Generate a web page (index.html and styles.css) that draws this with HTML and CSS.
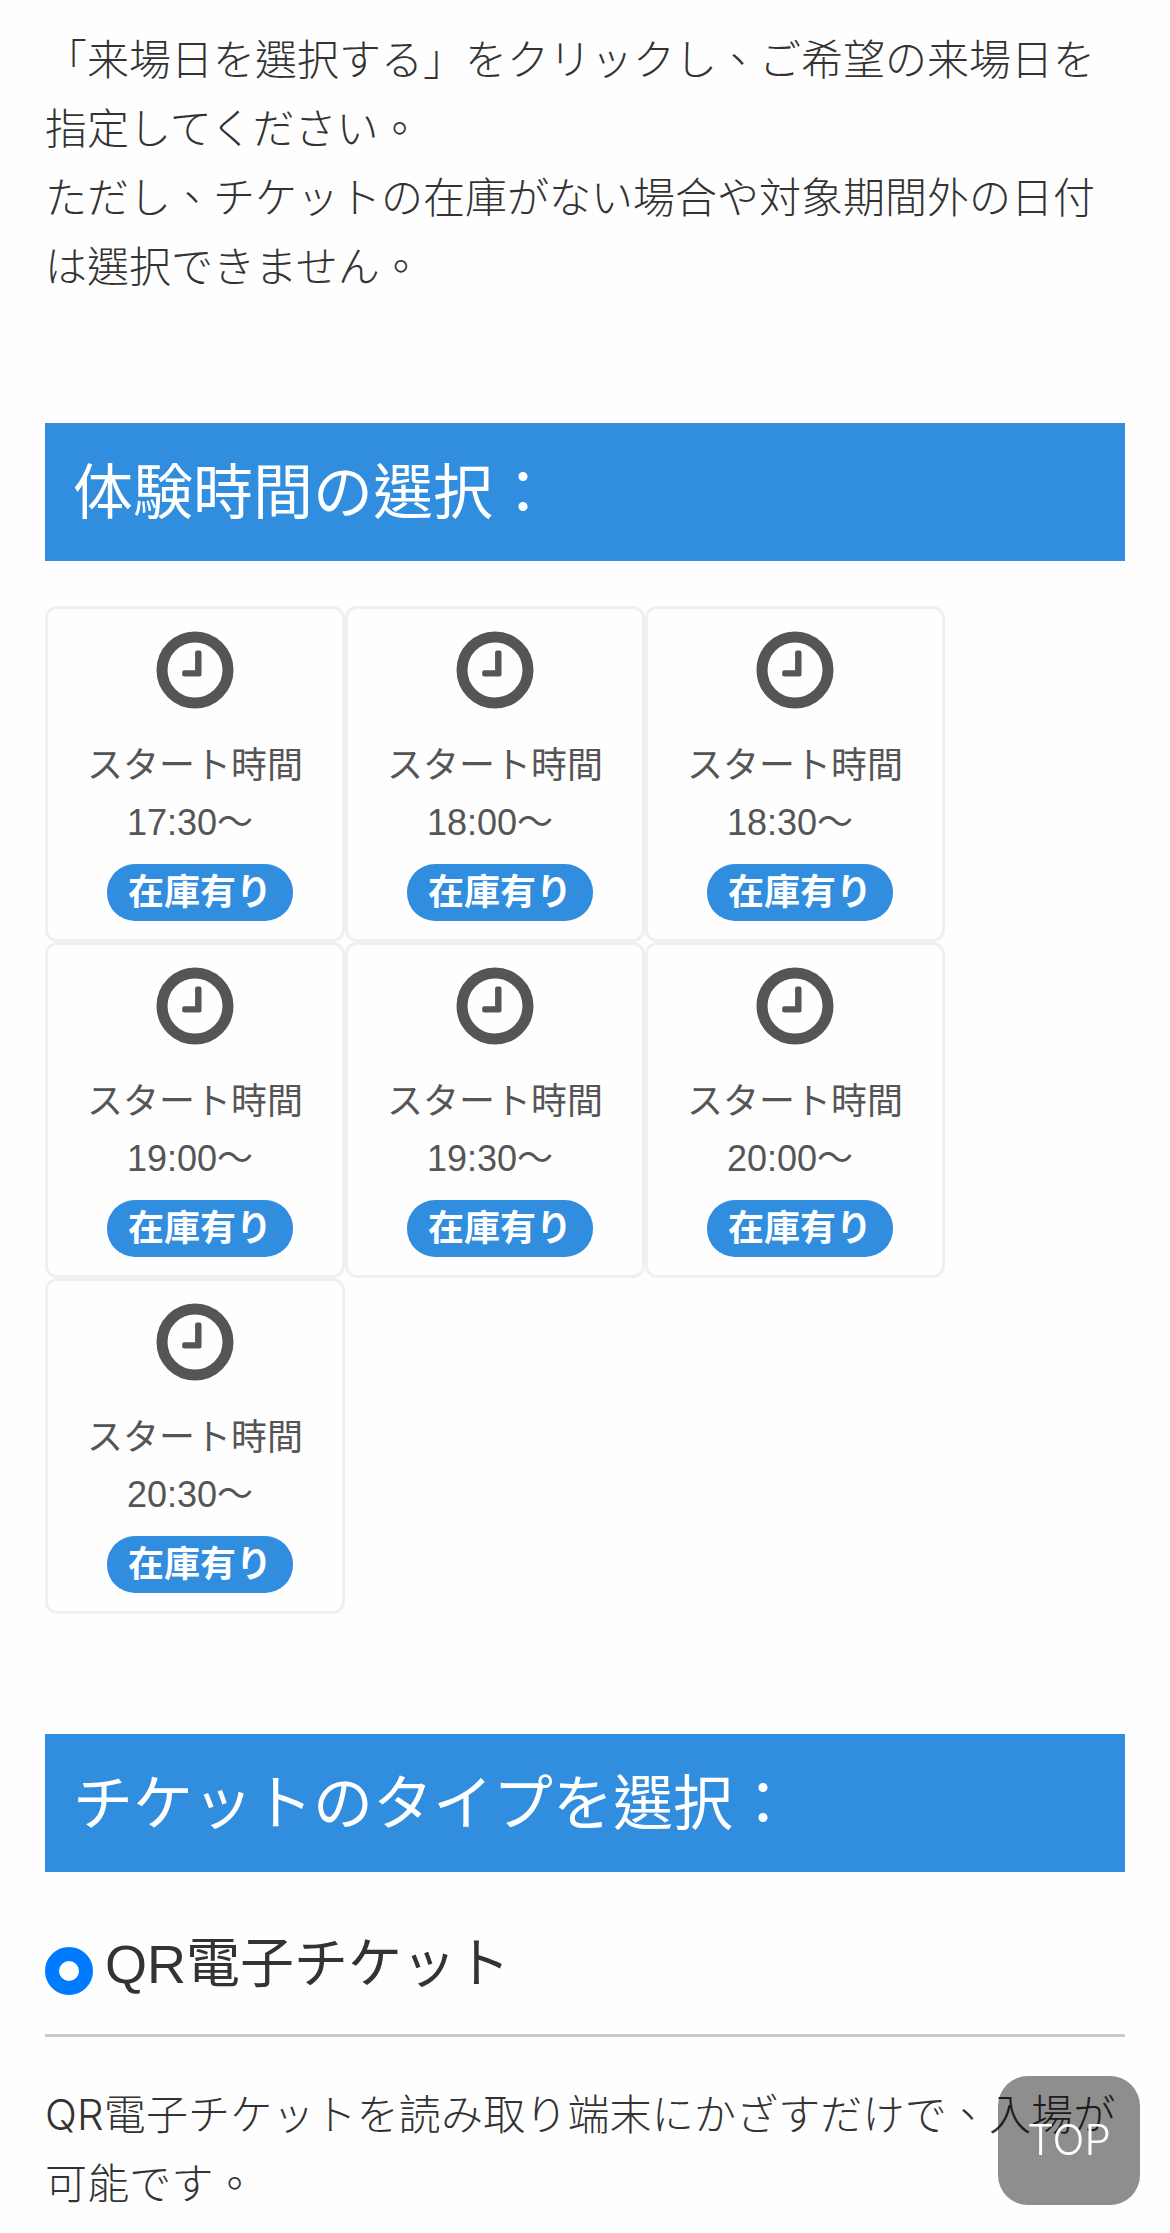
FILE: index.html
```html
<!DOCTYPE html>
<html lang="zh-Hant">
<head>
    <meta charset="UTF-8">
    <meta name="viewport" content="width=device-width, initial-scale=1.0">
    <title>チケット購入</title>
    <link rel="stylesheet" href="styles.css">
</head>
<body>
    <svg class="symbols" aria-hidden="true">
        <symbol id="clock" viewBox="0 0 78 78">
            <circle cx="39" cy="39" r="33" fill="none" stroke="currentColor" stroke-width="11"/>
            <path d="M41 19.500h2.500a2 2 0 0 1 2 2v22a2 2 0 0 1-2 2h-15.300a2 2 0 0 1-2-2v-2.300a2 2 0 0 1 2-2h10.900v-17.700a2 2 0 0 1 2-2z" fill="currentColor"/>
        </symbol>
    </svg>
    <div class="container">
        <p class="text">「来場日を選択する」をクリックし、ご希望の来場日を指定してください。<br>ただし、チケットの在庫がない場合や対象期間外の日付は選択できません。</p>

        <h2 class="title">体験時間の選択：</h2>
        <div class="times">
            <div class="time-card">
                <svg class="clock"><use href="#clock"/></svg>
                <div class="label">スタート時間</div>
                <div class="time">17:30〜&nbsp;</div>
                <span class="stock">在庫有り</span>
            </div>
            <div class="time-card">
                <svg class="clock"><use href="#clock"/></svg>
                <div class="label">スタート時間</div>
                <div class="time">18:00〜&nbsp;</div>
                <span class="stock">在庫有り</span>
            </div>
            <div class="time-card">
                <svg class="clock"><use href="#clock"/></svg>
                <div class="label">スタート時間</div>
                <div class="time">18:30〜&nbsp;</div>
                <span class="stock">在庫有り</span>
            </div>
            <div class="time-card">
                <svg class="clock"><use href="#clock"/></svg>
                <div class="label">スタート時間</div>
                <div class="time">19:00〜&nbsp;</div>
                <span class="stock">在庫有り</span>
            </div>
            <div class="time-card">
                <svg class="clock"><use href="#clock"/></svg>
                <div class="label">スタート時間</div>
                <div class="time">19:30〜&nbsp;</div>
                <span class="stock">在庫有り</span>
            </div>
            <div class="time-card">
                <svg class="clock"><use href="#clock"/></svg>
                <div class="label">スタート時間</div>
                <div class="time">20:00〜&nbsp;</div>
                <span class="stock">在庫有り</span>
            </div>
            <div class="time-card">
                <svg class="clock"><use href="#clock"/></svg>
                <div class="label">スタート時間</div>
                <div class="time">20:30〜&nbsp;</div>
                <span class="stock">在庫有り</span>
            </div>
        </div>

        <h2 class="title title-type">チケットのタイプを選択：</h2>
        <label class="ticket-type">
            <input type="radio" name="ticket" class="radio" checked>
            <span class="ticket-name">QR電子チケット</span>
        </label>
        <p class="text text-type">QR電子チケットを読み取り端末にかざすだけで、入場が可能です。</p>
    </div>
    <a href="#" class="top-button">TOP</a>
</body>
</html>
```

FILE: styles.css
```css
* {
    box-sizing: border-box;
}
body {
    font-family: "Liberation Sans", "Noto Sans CJK TC", sans-serif;
    margin: 0;
    height: 2233px;
    overflow: hidden;
    background-color: #fefefe;
    color: #333;
}
.symbols {
    display: none;
}
.container {
    padding: 25px 45px 0;
}
.text {
    font-family: "Inter", "Noto Sans CJK TC", sans-serif;
    font-size: 42px;
    font-weight: 300;
    line-height: 69px;
    margin: 0;
}
.text-type {
    letter-spacing: 0.15px;
}
.title {
    height: 138px;
    margin: 122px 0 45px;
    padding: 2px 0 0 28px;
    font-size: 60px;
    font-weight: 400;
    line-height: 138px;
    background-color: #318dde;
    color: #fff;
}
.title-type {
    margin: 120px 0 46px;
}
.times {
    display: flex;
    flex-wrap: wrap;
    width: 900px;
}
.time-card {
    display: flex;
    flex-direction: column;
    align-items: center;
    width: 300px;
    height: 336px;
    padding-top: 22px;
    border: 3px solid #f0f0f0;
    border-radius: 12px;
    color: #555;
    font-size: 36px;
}
.clock {
    width: 78px;
    height: 78px;
    margin-bottom: 28px;
}
.label,
.time {
    line-height: 57px;
}
.stock {
    height: 57px;
    margin: 13px 0 0 10px;
    padding: 0 21px;
    border-radius: 28px;
    font-weight: bold;
    line-height: 58px;
    background-color: #318dde;
    color: #fff;
}
.ticket-type {
    display: flex;
    align-items: center;
    height: 119px;
    margin-bottom: 43px;
    padding-bottom: 10px;
    border-bottom: 3px solid #ccc;
    font-size: 54px;
}
.ticket-name {
    padding-bottom: 24px;
}
.radio {
    appearance: none;
    width: 48px;
    height: 48px;
    margin: 0 12px 0 0;
    border: 14px solid #007aff;
    border-radius: 50%;
    background-color: #fff;
}
.top-button {
    position: fixed;
    right: 30px;
    bottom: 28px;
    width: 142px;
    height: 129px;
    border-radius: 30px;
    font-family: "Inter", sans-serif;
    font-size: 42px;
    font-weight: 300;
    line-height: 127px;
    text-align: center;
    text-decoration: none;
    background-color: rgba(0, 0, 0, 0.44);
    color: #fff;
}
```
